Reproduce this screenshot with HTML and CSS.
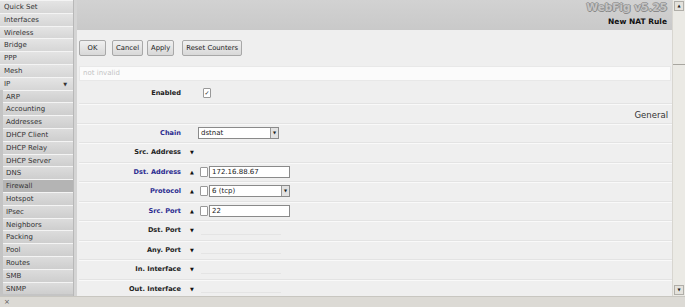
FILE: index.html
```html
<!DOCTYPE html>
<html lang="en">
<head>
  <meta charset="UTF-8">
  <title>WebFig</title>
  <link rel="stylesheet" href="styles.css">
</head>
<body>
  <div class="window">
    <div class="main">
      <ul class="menu">
        <li>Quick Set</li>
        <li>Interfaces</li>
        <li>Wireless</li>
        <li>Bridge</li>
        <li>PPP</li>
        <li>Mesh</li>
        <li class="group">IP <span class="caret">&#9660;</span></li>
        <li class="sub">ARP</li>
        <li class="sub">Accounting</li>
        <li class="sub">Addresses</li>
        <li class="sub">DHCP Client</li>
        <li class="sub">DHCP Relay</li>
        <li class="sub">DHCP Server</li>
        <li class="sub">DNS</li>
        <li class="sub active">Firewall</li>
        <li class="sub">Hotspot</li>
        <li class="sub">IPsec</li>
        <li class="sub">Neighbors</li>
        <li class="sub">Packing</li>
        <li class="sub">Pool</li>
        <li class="sub">Routes</li>
        <li class="sub">SMB</li>
        <li class="sub">SNMP</li>
      </ul>

      <div class="content">
        <div class="header">
          <div class="brand">WebFig v5.25</div>
          <div class="title">New NAT Rule</div>
        </div>

        <div class="buttons">
          <button class="ok">OK</button>
          <button>Cancel</button>
          <button>Apply</button>
          <button class="spaced">Reset Counters</button>
        </div>

        <div class="status">not invalid</div>

        <div class="row first">
          <label>Enabled</label>
          <span class="arrow"></span>
          <span class="check checked">&#10003;</span>
        </div>

        <div class="section">General</div>

        <div class="row">
          <label class="blue">Chain</label>
          <div class="select chain">dstnat<span class="drop">&#9660;</span></div>
        </div>
        <div class="row">
          <label>Src. Address</label>
          <span class="arrow">&#9660;</span>
        </div>
        <div class="row">
          <label class="blue">Dst. Address</label>
          <span class="arrow">&#9650;</span>
          <span class="check"></span>
          <div class="field">172.16.88.67</div>
        </div>
        <div class="row">
          <label class="blue">Protocol</label>
          <span class="arrow">&#9650;</span>
          <span class="check"></span>
          <div class="select">6 (tcp)<span class="drop">&#9660;</span></div>
        </div>
        <div class="row">
          <label class="blue">Src. Port</label>
          <span class="arrow">&#9650;</span>
          <span class="check"></span>
          <div class="field">22</div>
        </div>
        <div class="row">
          <label>Dst. Port</label>
          <span class="arrow">&#9660;</span>
          <span class="blank"></span>
        </div>
        <div class="row">
          <label>Any. Port</label>
          <span class="arrow">&#9660;</span>
          <span class="blank"></span>
        </div>
        <div class="row">
          <label>In. Interface</label>
          <span class="arrow">&#9660;</span>
          <span class="blank"></span>
        </div>
        <div class="row">
          <label>Out. Interface</label>
          <span class="arrow">&#9660;</span>
          <span class="blank"></span>
        </div>
      </div>

      <div class="scrollbar">
        <span class="sb-btn">&#9650;</span>
        <span class="sb-thumb"></span>
        <span class="sb-track"></span>
        <span class="sb-btn">&#9660;</span>
      </div>
    </div>
    <div class="statusbar">&#215;</div>
  </div>
</body>
</html>
```

FILE: styles.css
```css
body {
  margin: 0;
  font-family: 'DejaVu Sans', Verdana, sans-serif;
  font-size: 7px;
  color: #222;
  background: #dcdad5;
}

.window {
  width: 685px;
  height: 307px;
  display: flex;
  flex-direction: column;
  overflow: hidden;
}

.main {
  height: 297px;
  display: flex;
  overflow: hidden;
}

/* left menu */
.menu {
  list-style: none;
  margin: 0;
  padding: 0;
  width: 73px;
  flex: none;
  background: #c4c4c4;
  border-right: 1px solid #b8b8b8;
}

.menu li {
  height: 11.8px;
  line-height: 12px;
  padding-left: 4px;
  background: linear-gradient(#e4e4e4, #d6d6d6);
  border-top: 1px solid #f4f4f4;
  color: #333;
  position: relative;
}

.menu li.sub {
  margin-left: 3px;
  padding-left: 3px;
  background: linear-gradient(#dcdcdc, #cecece);
}

.menu li.active {
  background: #b4b4b4;
}

.caret {
  position: absolute;
  right: 6px;
  font-size: 5px;
}

/* main panel */
.content {
  flex: 1;
  background: #efefef;
  border-left: 3px solid #d4d4d4;
}

.header {
  height: 30px;
  background: linear-gradient(#d2d2d2, #c9c9c9);
  text-align: right;
  padding-right: 5px;
  box-sizing: border-box;
}

.brand {
  font-family: Verdana, 'DejaVu Sans', sans-serif;
  font-weight: bold;
  font-size: 10.5px;
  color: #c4c4c4;
  text-shadow: 1px 0 0 #8a8a8a, -1px 0 0 #9a9a9a, 0 1px 0 #8a8a8a, 0 -1px 0 #a0a0a0;
  padding-top: 1px;
  height: 14px;
}

.title {
  font-weight: bold;
  font-size: 7.5px;
  color: #111;
  padding-top: 2px;
}

.buttons {
  display: flex;
  gap: 4px;
  padding: 10px 0 0 2px;
  height: 26px;
  box-sizing: border-box;
}

button {
  font-family: inherit;
  font-size: 6.8px;
  height: 16px;
  padding: 0 3px;
  color: #222;
  background: linear-gradient(#f0f0f0, #d8d8d8);
  border: 1px solid #a8a8a8;
  border-radius: 2px;
}

button.ok {
  width: 27px;
  margin-right: 2px;
}

button.spaced {
  margin-left: 4px;
}

.status {
  margin: 10px 1px 0 2px;
  height: 13px;
  line-height: 13px;
  padding-left: 3px;
  background: #fbfbfb;
  border: 1px solid #e8e8e8;
  color: #c4c4c4;
}

.row {
  height: 18.5px;
  display: flex;
  align-items: center;
  border-bottom: 1px solid #e3e3e3;
  box-shadow: 0 1px 0 #f9f9f9;
  margin-left: 2px;
}

.row.first {
  margin-top: 3px;
}

.row label {
  width: 102px;
  text-align: right;
  font-weight: bold;
  font-size: 6.6px;
  color: #222;
}

.row label.blue {
  color: #2b2b8f;
}

.arrow {
  width: 10px;
  margin-left: 9px;
  font-size: 5px;
  color: #111;
}

.check {
  width: 6px;
  height: 8px;
  border: 1px solid #999;
  border-radius: 1px;
  background: #fff;
  font-size: 6px;
  line-height: 8px;
  text-align: center;
  margin-right: 1px;
}

.check.checked {
  margin-left: 3px;
}

.field {
  width: 77px;
  height: 10px;
  line-height: 10px;
  padding-left: 2px;
  background: #fff;
  border: 1px solid #8a8a8a;
  font-size: 7px;
}

.select {
  width: 77px;
  height: 10px;
  line-height: 10px;
  padding-left: 2px;
  background: #fff;
  border: 1px solid #8a8a8a;
  position: relative;
  font-size: 7px;
}

.select.chain {
  margin-left: 17px;
}

.drop {
  position: absolute;
  right: 0;
  top: 0;
  width: 7px;
  height: 10px;
  background: #e2e2e2;
  border-left: 1px solid #999;
  font-size: 4px;
  text-align: center;
}

.blank {
  width: 80px;
  height: 1px;
  margin-left: 1px;
  margin-top: 8px;
  background: #e4e4e4;
}

.section {
  height: 19px;
  line-height: 22px;
  text-align: right;
  padding-right: 4px;
  font-size: 8.5px;
  color: #333;
  border-bottom: 1px solid #e3e3e3;
  box-shadow: 0 1px 0 #f9f9f9;
}

/* scrollbar */
.scrollbar {
  width: 12px;
  flex: none;
  display: flex;
  flex-direction: column;
  background: #ebeae5;
  border-left: 1px solid #d8d6d0;
}

.sb-btn {
  height: 8px;
  font-size: 4px;
  text-align: center;
  line-height: 8px;
  background: #e4e2dc;
  border: 1px solid #b0aea8;
  margin: 1px;
}

.sb-thumb {
  height: 52px;
  background: #ebeae5;
  border-bottom: 1px solid #a8a6a0;
}

.sb-track {
  flex: 1;
}

.statusbar {
  height: 10px;
  line-height: 10px;
  padding-left: 4px;
  font-size: 7px;
  color: #555;
  background: #dcdad5;
  border-top: 1px solid #c8c6c0;
}
```
